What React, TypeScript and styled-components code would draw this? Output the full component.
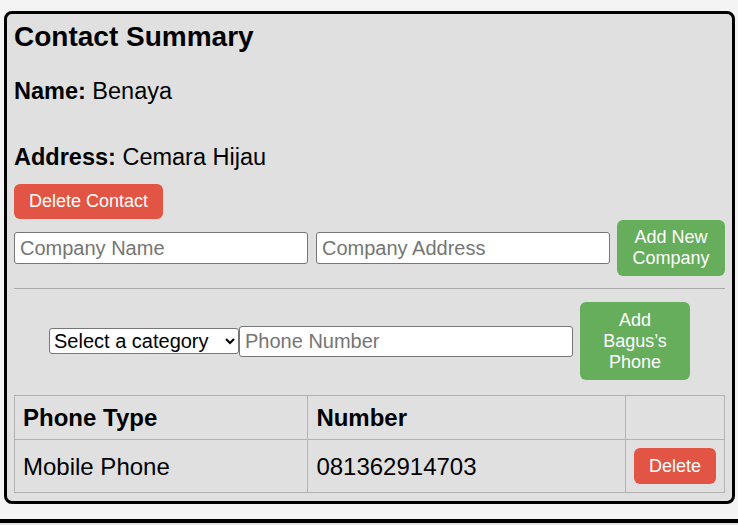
import React from "react";
import styled, { createGlobalStyle } from "styled-components";

const GlobalStyle = createGlobalStyle`
  html, body {
    margin: 0;
    padding: 0;
    background: #f4f4f4;
    font-family: "Liberation Sans", Arial, sans-serif;
    color: #000;
  }
  * { box-sizing: border-box; }
`;

const Page = styled.div`
  padding-top: 11px;
`;

const Card = styled.section`
  margin: 0 3px 0 4px;
  border: 3px solid #000;
  border-radius: 8px;
  background: #e0e0e0;
  padding: 7px 7px 8px 7px;
`;

const Title = styled.h2`
  margin: 0;
  font-size: 28px;
  line-height: 32px;
  font-weight: 700;
`;

const InfoLine = styled.p<{ $gap: number }>`
  margin: ${(p) => p.$gap}px 0 0 0;
  font-size: 23.5px;
  line-height: 27px;
  strong { font-weight: 700; }
`;

const ActionButton = styled.button<{ $variant: "danger" | "success"; $width?: number; $padY?: number }>`
  font-family: "Liberation Sans", Arial, sans-serif;
  font-size: 18px;
  line-height: 21px;
  color: #fff;
  border: none;
  border-radius: 6px;
  padding: ${(p) => p.$padY ?? 7}px 15px;
  cursor: pointer;
  text-align: center;
  background: ${(p) => (p.$variant === "danger" ? "#e25443" : "#66ad5c")};
  width: ${(p) => (p.$width ? `${p.$width}px` : "auto")};
  flex-shrink: 0;
`;

const DeleteContactRow = styled.div`
  margin-top: 13px;
  display: flex;
`;

const CompanyRow = styled.div`
  margin-top: 1px;
  display: flex;
  align-items: center;
  gap: 8px;
`;

const TextInput = styled.input<{ $width?: number; $height: number }>`
  font-family: "Liberation Sans", Arial, sans-serif;
  font-size: 20px;
  height: ${(p) => p.$height}px;
  padding: 0 5px;
  border: 1px solid #767676;
  border-radius: 3px;
  background: #fff;
  color: #000;
  ${(p) => (p.$width ? `width: ${p.$width}px; flex: none;` : "flex: 1; min-width: 0;")}
  &::placeholder { color: #757575; }
`;

const Divider = styled.hr`
  margin: 12px 0 13px 0;
  border: none;
  border-top: 1px solid #a9a9a9;
  height: 0;
`;

const PhoneRow = styled.div`
  display: flex;
  align-items: center;
  justify-content: center;
`;

const CategorySelect = styled.select`
  font-family: "Liberation Sans", Arial, sans-serif;
  font-size: 20px;
  height: 26px;
  border: 1px solid #767676;
  border-radius: 3px;
  background: #fff;
  color: #000;
  width: 190px;
`;

const PhoneButtonWrap = styled.div`
  margin-left: 7px;
`;

const Table = styled.table`
  margin-top: 15px;
  width: 100%;
  border-collapse: collapse;
  font-size: 24px;
  line-height: 27px;
`;

const Col = styled.col<{ $w: number }>`
  width: ${(p) => p.$w}px;
`;

const HeadCell = styled.th`
  border: 1px solid #b3b3b3;
  padding: 8px;
  text-align: left;
  font-weight: 700;
`;

const Cell = styled.td`
  border: 1px solid #b3b3b3;
  padding: 8px;
  text-align: left;
  vertical-align: middle;
`;

const NextCard = styled.div`
  margin-top: 15px;
  border-top: 4px solid #000;
  background: #e4e4e4;
  height: 40px;
`;

export default function App() {
  return (
    <>
      <GlobalStyle />
      <Page>
        <Card>
          <Title>Contact Summary</Title>
          <InfoLine $gap={25}>
            <strong>Name:</strong> Benaya
          </InfoLine>
          <InfoLine $gap={39}>
            <strong>Address:</strong> Cemara Hijau
          </InfoLine>
          <DeleteContactRow>
            <ActionButton $variant="danger">Delete Contact</ActionButton>
          </DeleteContactRow>
          <CompanyRow>
            <TextInput $height={32} placeholder="Company Name" />
            <TextInput $height={32} placeholder="Company Address" />
            <ActionButton $variant="success" $width={108} style={{ marginLeft: -1 }}>
              Add New Company
            </ActionButton>
          </CompanyRow>
          <Divider />
          <PhoneRow>
            <CategorySelect defaultValue="">
              <option value="">Select a category</option>
              <option value="mobile">Mobile Phone</option>
              <option value="home">Home Phone</option>
              <option value="work">Work Phone</option>
            </CategorySelect>
            <TextInput $height={31} $width={334} placeholder="Phone Number" />
            <PhoneButtonWrap>
              <ActionButton $variant="success" $width={110} $padY={7.5}>
                Add Bagus’s Phone
              </ActionButton>
            </PhoneButtonWrap>
          </PhoneRow>
          <Table>
            <colgroup>
              <Col $w={294} />
              <Col $w={318} />
              <Col $w={99} />
            </colgroup>
            <thead>
              <tr>
                <HeadCell>Phone Type</HeadCell>
                <HeadCell>Number</HeadCell>
                <HeadCell></HeadCell>
              </tr>
            </thead>
            <tbody>
              <tr>
                <Cell>Mobile Phone</Cell>
                <Cell>081362914703</Cell>
                <Cell>
                  <ActionButton $variant="danger" $padY={7.5}>Delete</ActionButton>
                </Cell>
              </tr>
            </tbody>
          </Table>
        </Card>
        <NextCard />
      </Page>
    </>
  );
}
